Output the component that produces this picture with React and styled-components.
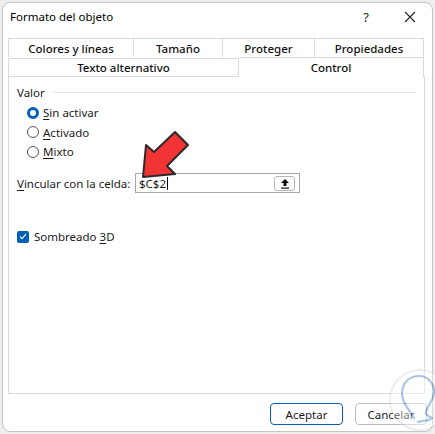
import React from "react";
import styled, { createGlobalStyle } from "styled-components";

const Global = createGlobalStyle`
  html, body {
    margin: 0;
    padding: 0;
    background: #eeeeee;
  }
  body {
    font-family: "Noto Sans", "Open Sans", sans-serif;
    font-size: 11.5px;
    color: #1a1a1a;
  }
`;

const Page = styled.div`
  width: 435px;
  height: 434px;
  padding: 2px 0 0 2px;
  box-sizing: border-box;
  position: relative;
  overflow: hidden;
`;

const Dialog = styled.div`
  width: 431px;
  height: 430px;
  box-sizing: border-box;
  background: #ffffff;
  border: 1px solid #c4c4c4;
  border-radius: 8px;
  display: flex;
  flex-direction: column;
  padding: 0 7px 0 5px;
`;

const TitleBar = styled.div`
  height: 30px;
  display: flex;
  align-items: center;
  padding-left: 2px;
  margin-right: -7px;
  font-size: 11.5px;
  color: #000;
`;

const Title = styled.div`
  flex: 1;
  padding-bottom: 3px;
`;

const TitleButton = styled.div`
  width: 44px;
  height: 28px;
  display: flex;
  align-items: center;
  justify-content: center;
  font-size: 13px;
  color: #222;
  padding-bottom: 2px;
`;

const Tabs = styled.div`
  margin-top: 5px;
  display: flex;
  flex-direction: column;
`;

const TabRow = styled.div`
  display: grid;
  grid-template-columns: ${({ cols }) => cols};
  align-items: end;
  height: 19px;
`;

const Tab = styled.div`
  height: ${({ active }) => (active ? "21px" : "19px")};
  box-sizing: border-box;
  border: 1px solid #dadada;
  border-left-width: ${({ first }) => (first ? "1px" : "0")};
  border-bottom-color: ${({ active }) => (active ? "#ffffff" : "#dadada")};
  border-bottom-width: ${({ bottom }) => (bottom ? "1px" : "0")};
  background: #fff;
  display: flex;
  align-items: center;
  justify-content: center;
  font-size: 11.5px;
  font-weight: 500;
  color: #111;
  position: relative;
  z-index: ${({ active }) => (active ? 2 : 1)};
  margin-bottom: ${({ active }) => (active ? "-1px" : "0")};
`;

const Panel = styled.div`
  height: 318px;
  box-sizing: border-box;
  border: 1px solid #dadada;
  padding: 7px 8px 0 8px;
  display: flex;
  flex-direction: column;
`;

const GroupHead = styled.div`
  display: flex;
  align-items: center;
  gap: 8px;
  height: 16px;
  &::after {
    content: "";
    flex: 1;
    height: 1px;
    background: #e2e2e2;
  }
`;

const RadioList = styled.div`
  display: flex;
  flex-direction: column;
  gap: 4.5px;
  padding: 5px 0 0 10px;
`;

const Option = styled.label`
  display: flex;
  align-items: center;
  gap: 4px;
  height: 15px;
`;

const Radio = styled.span`
  width: 12px;
  height: 12px;
  box-sizing: border-box;
  border-radius: 50%;
  border: ${({ on }) => (on ? "3.5px solid #005fb8" : "1px solid #555")};
  background: #fff;
`;

const Key = styled.span`
  text-decoration: underline;
  text-underline-offset: 2px;
`;

const LinkRow = styled.div`
  display: grid;
  grid-template-columns: 118px 165px;
  align-items: center;
  margin-top: 14px;
`;

const Input = styled.div`
  height: 20px;
  box-sizing: border-box;
  border: 1px solid #a8a8a8;
  display: flex;
  align-items: center;
  padding: 0 4px 0 3px;
`;

const InputText = styled.span`
  flex: 1;
  display: flex;
  align-items: center;
`;

const Caret = styled.span`
  width: 1px;
  height: 13px;
  background: #000;
  margin-left: 1px;
`;

const PickButton = styled.div`
  width: 21px;
  height: 15px;
  box-sizing: border-box;
  border: 1px solid #b8b8b8;
  border-radius: 3px;
  display: flex;
  align-items: center;
  justify-content: center;
`;

const CheckRow = styled.label`
  display: flex;
  align-items: center;
  gap: 5px;
  margin-top: 36px;
`;

const Check = styled.span`
  width: 12px;
  height: 12px;
  border-radius: 2px;
  background: #005fb8;
  display: flex;
  align-items: center;
  justify-content: center;
`;

const Footer = styled.div`
  display: flex;
  justify-content: flex-end;
  gap: 12px;
  padding-top: 9px;
  margin-right: -2px;
`;

const Button = styled.div`
  width: ${({ w }) => w}px;
  height: 22px;
  box-sizing: border-box;
  border-radius: 4px;
  border: 1px solid ${({ primary }) => (primary ? "#005fb8" : "#bdbdbd")};
  display: flex;
  align-items: center;
  justify-content: center;
  font-size: 11.5px;
  background: #fff;
`;

const Overlay = styled.svg`
  position: absolute;
  left: ${({ x }) => x}px;
  top: ${({ y }) => y}px;
  pointer-events: none;
`;

export default function App() {
  return (
    <>
      <Global />
      <Page>
        <Dialog>
          <TitleBar>
            <Title>Formato del objeto</Title>
            <TitleButton>?</TitleButton>
            <TitleButton>
              <svg width="12" height="12" viewBox="0 0 12 12">
                <path d="M1 1L11 11M11 1L1 11" stroke="#222" strokeWidth="1.1" />
              </svg>
            </TitleButton>
          </TitleBar>
          <Tabs>
            <TabRow cols="126px 89px 92px 109px">
              <Tab first>Colores y líneas</Tab>
              <Tab>Tamaño</Tab>
              <Tab>Proteger</Tab>
              <Tab>Propiedades</Tab>
            </TabRow>
            <TabRow cols="231px 185px">
              <Tab first bottom>Texto alternativo</Tab>
              <Tab active bottom>Control</Tab>
            </TabRow>
          </Tabs>
          <Panel>
            <GroupHead>Valor</GroupHead>
            <RadioList>
              <Option>
                <Radio on />
                <span><Key>S</Key>in activar</span>
              </Option>
              <Option>
                <Radio />
                <span><Key>A</Key>ctivado</span>
              </Option>
              <Option>
                <Radio />
                <span><Key>M</Key>ixto</span>
              </Option>
            </RadioList>
            <LinkRow>
              <span><Key>V</Key>incular con la celda:</span>
              <Input>
                <InputText>$C$2<Caret /></InputText>
                <PickButton>
                  <svg width="10" height="11" viewBox="0 0 10 11">
                    <path d="M5 1L1 5H3.5V8H6.5V5H9Z" fill="#111" />
                    <rect x="1" y="9.5" width="8" height="1.2" fill="#111" />
                  </svg>
                </PickButton>
              </Input>
            </LinkRow>
            <CheckRow>
              <Check>
                <svg width="8" height="7" viewBox="0 0 8 7">
                  <path d="M1 3.6L3 5.6L7 1.2" stroke="#fff" strokeWidth="1.1" fill="none" />
                </svg>
              </Check>
              <span>Sombreado <Key>3</Key>D</span>
            </CheckRow>
          </Panel>
          <Footer>
            <Button primary w={73}>Aceptar</Button>
            <Button w={72}>Cancelar</Button>
          </Footer>
        </Dialog>

        <Overlay x={137} y={126} width="58" height="58" viewBox="0 0 58 58">
          <path
            d="M6 51 L9 19 L17 26 L38 6 L51 19 L30 40 L38 48 Z"
            fill="#f23434"
            stroke="#2a2a2a"
            strokeWidth="2"
            strokeLinejoin="round"
          />
        </Overlay>

        <Overlay x={388} y={364} width="60" height="72" viewBox="0 0 60 72" opacity="0.4">
          <circle cx="32" cy="36" r="30" fill="#ffffff" stroke="#d4d4d4" strokeWidth="2" />
          <path
            d="M26 54 C22 46 14 40 14 30 C14 18 22 12 31 12 C40 12 46 19 46 28 C46 36 40 40 38 48 C37 52 42 52 44 54 C40 58 34 56 30 58"
            fill="none"
            stroke="#2f6fbf"
            strokeWidth="2.2"
            strokeLinecap="round"
          />
        </Overlay>
      </Page>
    </>
  );
}
